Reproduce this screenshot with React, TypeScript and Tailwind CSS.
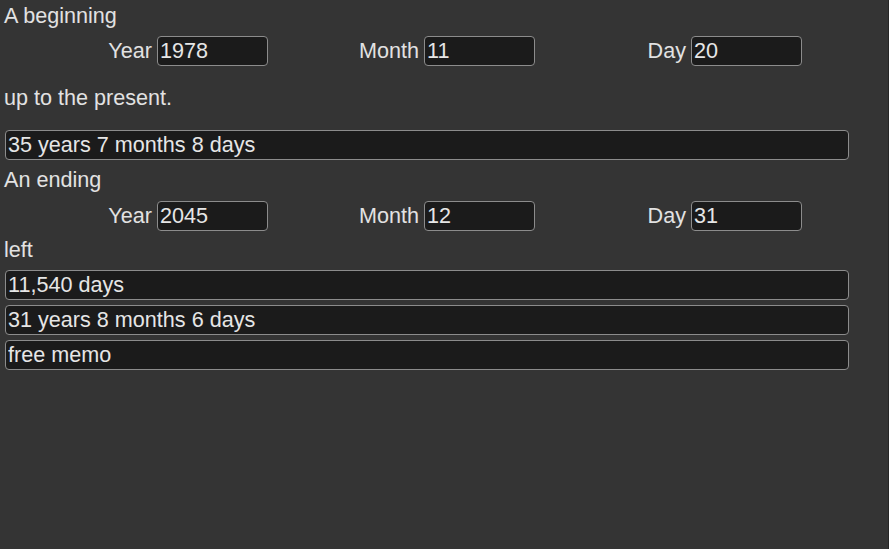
import { useState } from 'react';

type DateParts = { year: string; month: string; day: string };

function Field({ label, value, onChange }: { label: string; value: string; onChange: (v: string) => void }) {
  return (
    <div className="flex items-center justify-end gap-[5px]">
      <span className="text-[#e2e2e2]">{label}</span>
      <input
        className="w-[111px] h-[30px] rounded-[4px] border border-[#8c8c8c] bg-[#1b1b1b] pl-[2px] text-[#e6e6e6] outline-none"
        value={value}
        onChange={(e) => onChange(e.target.value)}
      />
    </div>
  );
}

function DateRow({ date, setDate, className }: { date: DateParts; setDate: (d: DateParts) => void; className: string }) {
  return (
    <div className={`grid grid-cols-[268px_267px_267px] h-[30px] ${className}`}>
      <Field label="Year" value={date.year} onChange={(v) => setDate({ ...date, year: v })} />
      <Field label="Month" value={date.month} onChange={(v) => setDate({ ...date, month: v })} />
      <Field label="Day" value={date.day} onChange={(v) => setDate({ ...date, day: v })} />
    </div>
  );
}

const wideInput =
  'block ml-[5px] w-[844px] h-[30px] rounded-[4px] border border-[#8c8c8c] bg-[#1b1b1b] pl-[2px] text-[#e6e6e6] outline-none';

export default function App() {
  const [start, setStart] = useState<DateParts>({ year: '1978', month: '11', day: '20' });
  const [end, setEnd] = useState<DateParts>({ year: '2045', month: '12', day: '31' });
  const [memo, setMemo] = useState('free memo');

  return (
    <div
      className="min-h-screen w-full bg-[#343434] border-r border-[#262626] text-[21.6px] text-[#e2e2e2]"
      style={{ fontFamily: '"Liberation Sans", Arial, sans-serif' }}
    >
      <p className="leading-[31px] pl-[4px]">A beginning</p>
      <DateRow date={start} setDate={setStart} className="mt-[4px]" />

      <p className="mt-[21px] leading-[24px] pl-[4px]">up to the present.</p>
      <input className={`${wideInput} mt-[20px]`} value="35 years 7 months 8 days" readOnly />

      <p className="mt-2 leading-[24px] pl-[4px]">An ending</p>
      <DateRow date={end} setDate={setEnd} className="mt-[8px]" />

      <p className="mt-[8px] leading-[24px] pl-[4px]">left</p>
      <div className="mt-[8px] flex flex-col gap-[5px]">
        <input className={wideInput} value="11,540 days" readOnly />
        <input className={wideInput} value="31 years 8 months 6 days" readOnly />
        <input className={wideInput} value={memo} onChange={(e) => setMemo(e.target.value)} />
      </div>
    </div>
  );
}
